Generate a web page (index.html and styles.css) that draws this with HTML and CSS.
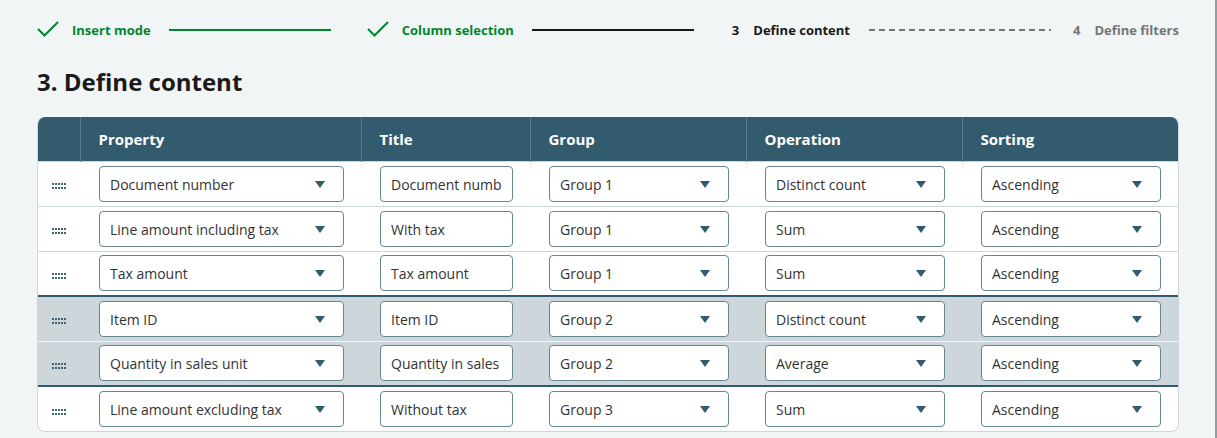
FILE: index.html
```html
<!DOCTYPE html>
<html lang="en">
<head>
  <meta charset="UTF-8">
  <meta name="viewport" content="width=device-width, initial-scale=1.0">
  <title>Define content</title>
  <link rel="stylesheet" href="styles.css">
</head>
<body>
  <div class="page">
    <!-- Stepper -->
    <nav class="stepper">
      <div class="step done">
        <svg class="check" viewBox="0 0 22 16" width="22" height="16"><path d="M1 8 L7.5 14.5 L21 1" fill="none" stroke="currentColor" stroke-width="2"/></svg>
        <span class="step-label">Insert mode</span>
      </div>
      <div class="step-line done-line"></div>
      <div class="step done">
        <svg class="check" viewBox="0 0 22 16" width="22" height="16"><path d="M1 8 L7.5 14.5 L21 1" fill="none" stroke="currentColor" stroke-width="2"/></svg>
        <span class="step-label">Column selection</span>
      </div>
      <div class="step-line current-line"></div>
      <div class="step current">
        <span class="step-num">3</span>
        <span class="step-label">Define content</span>
      </div>
      <div class="step-line todo-line"></div>
      <div class="step todo">
        <span class="step-num">4</span>
        <span class="step-label">Define filters</span>
      </div>
    </nav>

    <h1 class="title">3. Define content</h1>

    <div class="table-wrap">
      <table class="content-table">
        <colgroup>
          <col class="c-drag">
          <col class="c-property">
          <col class="c-title">
          <col class="c-group">
          <col class="c-operation">
          <col class="c-sorting">
        </colgroup>
        <thead>
          <tr>
            <th></th>
            <th>Property</th>
            <th>Title</th>
            <th>Group</th>
            <th>Operation</th>
            <th>Sorting</th>
          </tr>
        </thead>
        <tbody id="rows"></tbody>
      </table>
    </div>
  </div>

  <script>
    const rows = [
      ["Document number", "Document number", "Group 1", "Distinct count", "Ascending", ""],
      ["Line amount including tax", "With tax", "Group 1", "Sum", "Ascending", ""],
      ["Tax amount", "Tax amount", "Group 1", "Sum", "Ascending", ""],
      ["Item ID", "Item ID", "Group 2", "Distinct count", "Ascending", "selected first"],
      ["Quantity in sales unit", "Quantity in sales unit", "Group 2", "Average", "Ascending", "selected last"],
      ["Line amount excluding tax", "Without tax", "Group 3", "Sum", "Ascending", ""]
    ];

    const arrow = '<svg class="arrow" viewBox="0 0 10 7" width="10" height="7"><path d="M0 0 H10 L5 7 Z" fill="currentColor"/></svg>';

    let dots = "";
    for (let y = 0; y < 2; y++) {
      for (let x = 0; x < 5; x++) {
        dots += '<rect x="' + (x * 3) + '" y="' + (y * 4) + '" width="2" height="2"/>';
      }
    }
    const handle = '<svg class="handle" viewBox="0 0 14 6" width="14" height="6">' + dots + '</svg>';

    function select(text) {
      return '<div class="select"><span class="select-text">' + text + '</span>' + arrow + '</div>';
    }

    let html = "";
    rows.forEach(function (r) {
      html += '<tr class="' + r[5] + '">' +
        '<td class="drag">' + handle + '</td>' +
        '<td>' + select(r[0]) + '</td>' +
        '<td><input class="text-input" type="text" value="' + r[1] + '"></td>' +
        '<td>' + select(r[2]) + '</td>' +
        '<td>' + select(r[3]) + '</td>' +
        '<td>' + select(r[4]) + '</td>' +
        '</tr>';
    });
    document.getElementById("rows").innerHTML = html;
  </script>
</body>
</html>
```

FILE: styles.css
```css
/* General Styles */
* {
  margin: 0;
  padding: 0;
  box-sizing: border-box;
  font-family: 'Open Sans', sans-serif;
}

body {
  background: #f2f5f6;
  color: #1a1a1a;
}

.page {
  height: 100vh;
  padding: 0 36px 0 37px;
  border-right: 2px solid #939d9e;
}

/* Stepper */
.stepper {
  display: flex;
  align-items: center;
  height: 60px;
  font-size: 13px;
  font-weight: 700;
}

.step {
  display: flex;
  align-items: center;
  white-space: nowrap;
}

.check {
  margin-right: 13px;
  margin-top: -2px;
}

.step.done {
  color: #00852f;
}

.step.current {
  color: #1a1a1a;
}

.step.todo {
  color: #757575;
}

.step-num {
  margin-right: 14px;
}

.step-line {
  width: 162px;
  height: 2px;
  flex-shrink: 0;
}

.done-line {
  background: #00852f;
  margin: 0 36px 0 18px;
}

.current-line {
  background: #1a1a1a;
  margin: 0 38px 0 18px;
}

.todo-line {
  flex: 1;
  width: auto;
  background: repeating-linear-gradient(90deg, #757575 0 6px, transparent 6px 10px);
  height: 1.5px;
  margin: 0 22px 0 19px;
}

/* Heading */
.title {
  font-size: 24px;
  font-weight: 700;
  line-height: 32px;
  margin-top: 6px;
  color: #1a1a1a;
}

/* Table */
.table-wrap {
  margin-top: 19px;
  border: 1px solid #ccd6db;
  border-top: none;
  border-radius: 8px;
  overflow: hidden;
  background: #fff;
}

.content-table {
  width: 100%;
  border-collapse: collapse;
  table-layout: fixed;
}

.c-drag { width: 42px; }
.c-property { width: 281px; }
.c-title { width: 169px; }
.c-group { width: 216px; }
.c-operation { width: 216px; }

.content-table th {
  background: #335b6e;
  color: #fff;
  height: 44px;
  text-align: left;
  font-size: 15px;
  font-weight: 700;
  padding: 0 18px 0 18px;
  border-left: 1px solid #5d7d8c;
}

.content-table th:first-child {
  border-left: none;
}

.content-table td {
  height: 45px;
  padding: 0 17px 0 19px;
  border-top: 1px solid #ccd6db;
  vertical-align: middle;
}

.content-table tr.selected td {
  background: #ccd6db;
}

.content-table tr.first td {
  border-top: 2px solid #335b6e;
}

.content-table tr.last td {
  border-top: 1px solid #f2f5f6;
}

.content-table tr.last + tr td {
  border-top: 2px solid #335b6e;
}

.content-table td.drag {
  padding: 2px 0 0 0;
  text-align: center;
}

.handle {
  fill: #3d6477;
  vertical-align: middle;
}

/* Inputs */
.select,
.text-input {
  display: flex;
  align-items: center;
  width: 100%;
  height: 36px;
  border: 1px solid #668592;
  border-radius: 4px;
  background: #fff;
  padding: 1px 18px 0 10px;
  font-size: 14px;
  color: #333;
}

.select-text {
  flex: 1;
  white-space: nowrap;
  overflow: hidden;
}

.arrow {
  color: #335b6e;
  flex-shrink: 0;
}

.text-input {
  padding: 1px 10px 0;
  outline: none;
}
```
